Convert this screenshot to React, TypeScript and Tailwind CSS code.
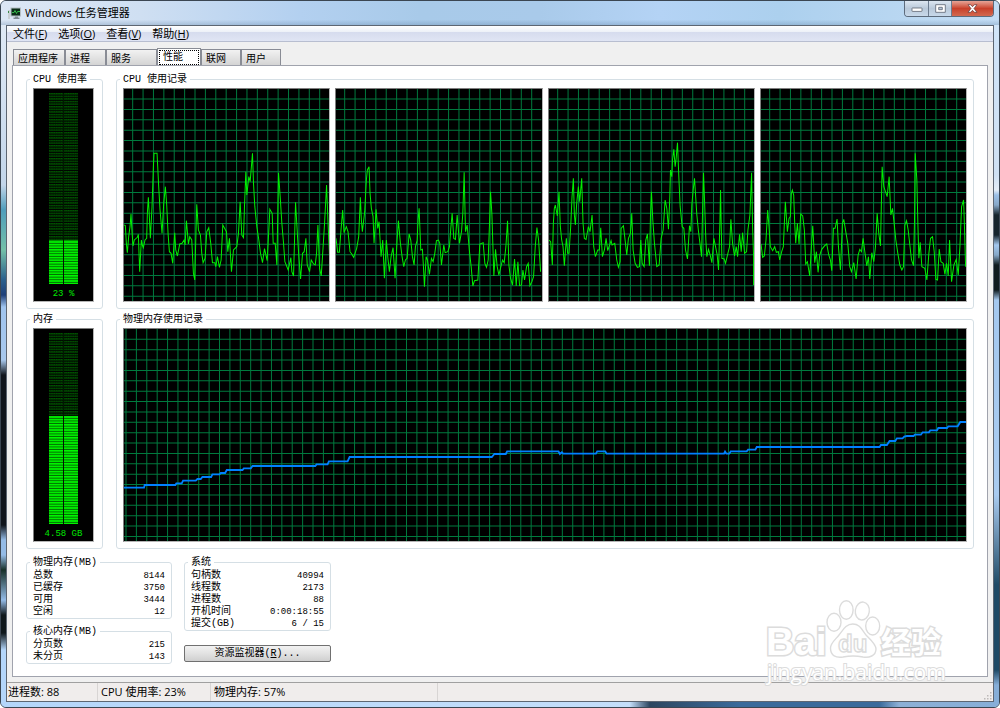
import { useState } from 'react';
import type { ReactNode } from 'react';

const MENUS = [
  { label: '文件', key: 'F' },
  { label: '选项', key: 'O' },
  { label: '查看', key: 'V' },
  { label: '帮助', key: 'H' },
];

const TABS = [
  { label: '应用程序', width: 'w-[52px]' },
  { label: '进程', width: 'w-[41px]' },
  { label: '服务', width: 'w-[51px]' },
  { label: '性能', width: 'w-[44px]' },
  { label: '联网', width: 'w-[40px]' },
  { label: '用户', width: 'w-[40px]' },
];

// One trace per CPU core, three units per pixel
const CORES = [
  '12,435 16,437 19,490 22,518 26,470 30,440 33,402 36,455 39,498 43,480 52,472 55,463 59,575 64,480 67,495 70,503 75,480 80,475 82,400 85,352 88,410 91,475 96,380 100,262 102,220 111,220 116,320 120,390 126,460 131,370 136,320 140,375 144,460 148,515 153,520 158,550 164,458 167,510 172,528 179,492 186,490 192,480 195,495 199,422 205,492 209,470 215,480 220,580 224,600 227,480 230,373 235,450 241,465 245,520 249,548 255,535 260,455 266,443 272,490 277,548 284,548 287,560 292,530 298,562 303,540 308,435 319,455 323,515 328,475 334,575 340,510 350,500 355,460 360,365 365,465 370,473 373,380 377,275 380,345 386,290 390,305 397,220 400,310 404,380 410,440 416,480 421,520 427,548 433,506 441,542 447,430 449,388 456,400 459,490 465,490 470,555 475,278 480,350 485,430 490,490 494,545 504,570 512,533 515,575 520,588 523,480 526,367 532,470 536,530 541,597 547,520 552,515 557,475 561,555 568,575 573,540 580,552 585,555 589,520 593,435 598,565 603,588 608,510 613,430 619,315 623,420 628,532',
  '12,475 17,517 22,517 27,450 32,390 36,458 43,440 48,455 54,515 59,522 65,532 74,505 80,470 83,400 85,352 88,420 91,455 98,395 103,300 106,270 111,260 114,340 118,385 123,410 126,490 130,430 132,388 137,445 141,425 147,530 152,480 157,595 163,480 167,530 172,575 177,530 183,503 189,595 195,480 199,422 205,490 210,530 215,560 220,540 225,535 231,462 236,480 241,530 246,555 250,500 255,482 258,420 261,385 266,510 271,508 274,560 277,620 282,530 286,540 292,583 298,535 303,545 308,520 313,482 319,480 323,490 328,555 335,495 339,518 347,515 352,500 356,445 360,400 365,475 370,478 375,405 382,490 388,455 392,400 396,277 400,455 405,435 412,515 417,560 422,618 427,602 437,600 443,492 453,488 458,550 463,562 468,540 472,430 475,335 479,400 485,588 490,508 495,560 500,585 506,560 511,540 516,548 521,500 526,422 530,555 535,595 541,615 547,537 552,618 557,545 562,617 568,615 572,570 577,600 583,560 588,550 593,617 599,605 604,590 609,500 614,443 619,480 625,575',
  '12,480 17,485 22,555 25,430 28,385 31,375 37,408 42,335 46,440 50,480 54,500 58,557 64,475 68,520 72,520 77,440 81,350 85,295 88,405 91,435 95,370 100,320 104,365 110,295 114,430 118,475 123,478 130,440 135,455 141,405 146,500 151,530 158,510 163,510 167,443 172,530 178,510 183,475 188,512 198,482 201,495 209,490 215,540 220,562 225,545 228,445 235,437 240,480 245,525 250,475 256,460 260,400 264,510 270,550 277,562 283,560 287,480 291,550 297,560 302,480 307,462 313,557 316,410 319,335 323,420 328,490 335,560 342,555 348,475 354,450 360,360 365,385 370,448 374,350 376,270 380,290 382,240 386,208 390,260 393,235 397,188 401,290 405,380 411,440 416,445 421,510 427,537 433,437 437,455 440,375 444,330 448,295 455,405 460,455 465,495 469,530 472,400 475,278 478,360 482,480 485,530 490,508 495,525 500,548 506,475 511,500 516,525 520,570 524,430 526,330 530,535 537,537 541,550 548,520 553,500 557,418 562,490 568,528 573,500 577,530 583,463 588,515 592,458 598,520 604,515 608,450 614,405 619,278 622,440 625,530 625,615',
  '12,492 17,532 22,528 27,480 32,390 36,440 40,500 47,512 53,500 58,517 64,515 68,540 74,515 79,500 82,430 85,365 91,455 96,415 100,410 103,340 106,330 110,345 113,430 116,490 121,430 126,492 131,402 137,408 142,450 146,552 151,545 158,588 163,500 167,437 173,548 178,515 183,577 188,525 194,508 203,497 209,492 215,525 220,540 224,572 229,445 234,445 240,417 244,500 250,570 256,430 260,418 266,455 272,490 278,560 283,575 290,548 297,597 303,525 308,508 313,515 318,475 323,515 329,558 334,530 338,597 344,518 350,545 355,500 360,400 365,460 370,498 375,260 380,320 390,350 396,290 401,405 406,385 411,430 416,480 422,520 428,555 434,570 439,560 443,435 448,422 453,450 458,495 463,540 469,557 472,420 474,220 479,300 482,430 485,535 489,487 494,560 503,565 509,600 515,520 520,475 526,470 531,515 536,598 541,600 546,507 551,545 558,550 563,583 568,550 573,588 577,480 583,605 590,555 597,538 603,585 608,500 613,380 619,360 622,450 625,560 628,545',
];

const MEMORY =
  '42,533 102,533 104,525 196,525 199,520 215,520 219,512 257,512 262,507 272,507 277,501 303,501 307,493 328,493 332,489 345,489 350,480 397,480 401,475 422,475 427,468 615,468 619,463 652,463 656,454 712,454 718,441 1144,441 1152,432 1186,432 1190,424 1344,424 1348,432 1354,427 1358,431 1456,431 1460,424 1484,424 1488,431 1840,431 1843,425 1847,431 1856,431 1860,424 1908,424 1912,419 1934,419 1938,411 2306,411 2310,405 2328,405 2336,393 2353,393 2358,385 2375,385 2380,380 2388,378 2408,378 2412,374 2430,374 2435,367 2454,367 2458,361 2478,361 2482,354 2508,354 2512,349 2540,349 2548,336 2570,336';

const STEP = 31.13;

type GraphProps = {
  label: string;
  points: string;
  x: number;
  y: number;
  width: number;
  firstX: number;
  firstY: number;
  color: string;
  stroke: number;
};

function Graph({ label, points, x, y, width, firstX, firstY, color, stroke }: GraphProps) {
  const cols = Math.ceil((x + width - firstX) / STEP);
  const rows = 20;

  return (
    <div className="h-[214px] min-w-0 flex-1 border border-t-[#7f7f7f] border-l-[#7f7f7f] border-r-[#b5b5b5] border-b-[#b5b5b5] bg-black">
      <svg
        role="img"
        aria-label={label}
        viewBox={`${x} ${y} ${width} 636`}
        preserveAspectRatio="none"
        className="block h-full w-full"
      >
        <g stroke="#007a3e" strokeWidth="3">
          {Array.from({ length: cols }, (_, i) => (
            <line key={`c${i}`} x1={firstX + i * STEP} x2={firstX + i * STEP} y1={y} y2={y + 636} />
          ))}
          {Array.from({ length: rows }, (_, i) => (
            <line key={`r${i}`} x1={x} x2={x + width} y1={firstY + i * STEP} y2={firstY + i * STEP} />
          ))}
        </g>
        <polyline points={points} fill="none" stroke={color} strokeWidth={stroke} />
      </svg>
    </div>
  );
}

function Meter({ id, label, filled, text }: { id: string; label: string; filled: number; text: string }) {
  return (
    <div className="flex h-[214px] w-[61px] flex-col items-center border border-t-[#7f7f7f] border-l-[#7f7f7f] border-r-[#b5b5b5] border-b-[#b5b5b5] bg-black pt-1">
      <svg role="img" aria-label={label} width="29" height="191" viewBox="0 0 29 191">
        <defs>
          <pattern id={`${id}-off`} width="1.73" height="2.6" patternUnits="userSpaceOnUse">
            <rect width="1.73" height="1.7" fill="#003800" />
            <rect width="0.86" height="0.9" fill="#005c00" />
          </pattern>
          <pattern id={`${id}-on`} width="29" height="2.6" patternUnits="userSpaceOnUse">
            <rect width="29" height="2.6" fill="#006800" />
            <rect width="29" height="1.6" fill="#00f800" />
          </pattern>
        </defs>
        <rect width="29" height={191 - filled} fill={`url(#${id}-off)`} />
        <rect y={191 - filled} width="29" height={filled} fill={`url(#${id}-on)`} />
        <rect x="14" width="1" height="191" fill="#001800" />
      </svg>
      <span className="pt-1 font-['Liberation_Mono',monospace] text-[9px] leading-3 text-[#00e800]">{text}</span>
    </div>
  );
}

function GroupBox({ title, className = '', children }: { title: string; className?: string; children: ReactNode }) {
  return (
    <fieldset className={`min-w-0 rounded-[3px] border border-[#d5dfe5] px-[3px] ${className}`}>
      <legend className="px-[3px] pt-0.5 leading-3 whitespace-pre">{title}</legend>
      <div className="px-[3px]">{children}</div>
    </fieldset>
  );
}

function StatTable({ rows }: { rows: [string, string][] }) {
  return (
    <table className="w-full border-collapse leading-3">
      <tbody>
        {rows.map(([name, value]) => (
          <tr key={name}>
            <th scope="row" className="p-0 text-left font-normal">
              {name}
            </th>
            <td className="h-3 p-0 text-right text-[9px] leading-3 whitespace-pre">{value}</td>
          </tr>
        ))}
      </tbody>
    </table>
  );
}

function AppIcon() {
  return (
    <svg width="13" height="13" viewBox="0 0 13 13" aria-hidden="true">
      <rect x="0" y="3" width="2" height="9" fill="#c9d0d4" />
      <rect x="0" y="4" width="1" height="2" fill="#3c8b46" />
      <rect x="2.5" y="0.5" width="10.5" height="9" fill="#b4bec4" />
      <rect x="3.5" y="1.5" width="8.5" height="7" fill="#0b2d18" />
      <path d="M4 5.5h2l1-2 1.5 3 1-2H12" fill="none" stroke="#35b84a" strokeWidth="1" />
      <path d="M7 9.5h3v1h1.5V12h-6v-1.5H7z" fill="#7e8a91" />
    </svg>
  );
}

function WindowButtons() {
  return (
    <div className="flex h-4 overflow-hidden rounded-b-[4px] border border-t-0 border-[#5d6b7c]">
      <button aria-label="最小化" className="flex w-6 items-center justify-center border-r border-[#6c7c90] bg-linear-to-b from-[#dce6f1] via-[#b9c9da] to-[#c7d8ea]">
        <svg width="12" height="6" viewBox="0 0 12 6">
          <rect x="1" y="2" width="10" height="3.4" rx="0.5" fill="#fff" stroke="#5a6270" strokeWidth="0.8" />
        </svg>
      </button>
      <button aria-label="最大化" className="flex w-[23px] items-center justify-center border-r border-[#6c7c90] bg-linear-to-b from-[#dce6f1] via-[#b9c9da] to-[#c7d8ea]">
        <svg width="11" height="9" viewBox="0 0 11 9">
          <path d="M.7.7h9.6v7.6H.7zM3.7 3.3v2.4h3.6V3.3z" fill="#fff" fillRule="evenodd" stroke="#5a6270" strokeWidth="0.8" />
        </svg>
      </button>
      <button aria-label="关闭" className="flex w-[41px] items-center justify-center bg-linear-to-b from-[#e5a497] via-[#c8402a] to-[#d2684f]">
        <svg width="11" height="9" viewBox="0 0 11 9">
          <path d="M1 .7h2.6l1.9 2 1.9-2H10L7 4.5l3 3.8H7.4l-1.9-2-1.9 2H1l3-3.8z" fill="#fff" stroke="#5b3a3c" strokeWidth="0.7" />
        </svg>
      </button>
    </div>
  );
}

function Watermark() {
  return (
    <svg
      className="pointer-events-none absolute right-[50px] bottom-[18px]"
      width="190"
      height="92"
      viewBox="0 0 190 92"
      fill="#fff"
      stroke="#dcdcdc"
      strokeWidth="1.4"
    >
      <ellipse cx="75" cy="25.3" rx="7" ry="9" />
      <ellipse cx="87.3" cy="13" rx="6.8" ry="9.3" />
      <ellipse cx="103.3" cy="14" rx="7" ry="9" transform="rotate(8 103.3 14)" />
      <ellipse cx="113.7" cy="29" rx="7" ry="9" />
      <path d="M93.7 27C101 27 103 33 107 38C112 43 117 47 117 52C117 59 110 61 104 60C97 58.5 91 58.5 84 60C77 61 71.5 59 71.5 51C71.5 46 77 42 80 38C84 33 87 27 93.7 27Z" />
      <g fontFamily="'Liberation Sans', sans-serif" fontWeight="700">
        <text x="7" y="58" fontSize="39" strokeWidth="3" paintOrder="stroke">
          Bai
        </text>
        <text x="79" y="55" fontSize="24">
          du
        </text>
      </g>
      <text
        x="122"
        y="56"
        fontSize="30"
        fontWeight="700"
        strokeWidth="3"
        paintOrder="stroke"
        fontFamily="'Noto Sans CJK SC', sans-serif"
      >
        经验
      </text>
      <text x="8" y="83" fontSize="21" strokeWidth="2" paintOrder="stroke" fontFamily="'Open Sans', sans-serif">
        jingyan.baidu.com
      </text>
    </svg>
  );
}

export default function App() {
  const [active, setActive] = useState('性能');

  return (
    <div className="relative flex min-h-screen flex-col overflow-hidden rounded-[6px] border border-[#3b4652] bg-[#bcd9fb] font-['Open_Sans','Noto_Sans_CJK_SC',sans-serif] text-[10px] text-black">
      {/* Title bar */}
      <header className="flex h-6 items-start justify-between bg-[linear-gradient(180deg,transparent_78%,rgba(90,125,160,0.3)_100%),linear-gradient(90deg,#dce7f5_0%,#cfdff2_14%,#b3d0f0_30%,#a8cae9_42%,#a9caea_54%,#b4d3f5_66%,#acd0ee_78%,#c3dcf4_100%)] pr-[5px] pl-[7px]">
        <div className="flex items-center gap-1 pt-1">
          <AppIcon />
          <h1 className="text-[11px] leading-4">Windows 任务管理器</h1>
        </div>
        <WindowButtons />
      </header>

      <div className="flex flex-1">
        {/* Glass edge, desktop showing through */}
        <div className="w-[5px] bg-[linear-gradient(180deg,#dfe9f5_0px,#c3d6ea_160px,#4f9dbb_185px,#74c0a8_225px,#2a5f8c_255px,#1f3f78_270px,#a0c4ee_282px,#a8c8ec_335px,#10151c_350px,#10151c_500px,#94bbe6_515px,#94bbe6_530px,#173028_545px,#94bbe6_575px,#10181c_590px,#10181c_608px,#b4d6fa_625px)]" />

        <div className="flex min-w-0 flex-1 flex-col border border-[#5d6672] bg-[#f0f0f0]">
          <nav className="flex h-4 gap-[11px] border-b border-[#b8bed0] bg-[linear-gradient(180deg,#ffffff_0%,#edf1f8_38%,#d6dcee_42%,#e0e5f4_100%)] pl-1.5 text-[11px]">
            {MENUS.map(({ label, key }) => (
              <button key={key} className="leading-4">
                {label}(<u>{key}</u>)
              </button>
            ))}
          </nav>

          <main className="flex flex-1 flex-col px-[5px] pt-1.5 pb-[5px] font-['Liberation_Mono','Noto_Sans_CJK_SC',monospace]">
            <div role="tablist" className="flex h-[17px] items-end pl-px">
              {TABS.map(({ label, width }) =>
                label === active ? (
                  <button
                    key={label}
                    role="tab"
                    aria-selected="true"
                    className={`${width} h-[17px] border border-b-0 border-[#898c95] bg-white p-px`}
                  >
                    <span className="block border border-dotted border-black pl-[3px] text-left leading-[13px]">{label}</span>
                  </button>
                ) : (
                  <button
                    key={label}
                    role="tab"
                    aria-selected="false"
                    onClick={() => setActive(label)}
                    className={`${width} h-4 border border-b-0 border-[#898c95] bg-linear-to-b from-[#f2f2f2] to-[#d4d4d4] pt-0.5 pl-1 text-left leading-[15px]`}
                  >
                    {label}
                  </button>
                )
              )}
            </div>

            <div role="tabpanel" className="flex-1 border border-[#a0a3ad] bg-white px-[13px] pt-1.5">
              {/* CPU */}
              <div className="flex gap-[13px]">
                <GroupBox title="CPU 使用率" className="w-[77px] pt-0.5 pb-1.5">
                  <Meter id="cpu" label="CPU 使用率" filled={44} text="23 %" />
                </GroupBox>
                <GroupBox title="CPU 使用记录" className="flex-1 pt-0.5 pb-1.5">
                  <div className="flex gap-[5px]">
                    {CORES.map((points, i) => (
                      <Graph
                        key={i}
                        label={`CPU ${i}`}
                        points={points}
                        x={12}
                        y={27}
                        width={615}
                        firstX={38}
                        firstY={57}
                        color="#00f000"
                        stroke={3}
                      />
                    ))}
                  </div>
                </GroupBox>
              </div>

              {/* Memory */}
              <div className="mt-[3px] flex gap-[13px]">
                <GroupBox title="内存" className="w-[77px] pt-0.5 pb-1.5">
                  <Meter id="mem" label="内存" filled={108} text="4.58 GB" />
                </GroupBox>
                <GroupBox title="物理内存使用记录" className="flex-1 pt-0.5 pb-1.5">
                  <div className="flex">
                    <Graph
                      label="物理内存使用记录"
                      points={MEMORY}
                      x={42}
                      y={57}
                      width={2523}
                      firstX={48}
                      firstY={88}
                      color="#0080ff"
                      stroke={5.5}
                    />
                  </div>
                </GroupBox>
              </div>

              {/* Totals */}
              <div className="mt-1.5 flex gap-3">
                <div className="flex w-[146px] flex-col gap-[5px]">
                  <GroupBox title="物理内存(MB)" className="pt-px">
                    <StatTable
                      rows={[
                        ['总数', '8144'],
                        ['已缓存', '3750'],
                        ['可用', '3444'],
                        ['空闲', '12'],
                      ]}
                    />
                  </GroupBox>
                  <GroupBox title="核心内存(MB)" className="pt-px">
                    <StatTable
                      rows={[
                        ['分页数', '215'],
                        ['未分页', '143'],
                      ]}
                    />
                  </GroupBox>
                </div>
                <div className="flex w-[147px] flex-col gap-3.5">
                  <GroupBox title="系统" className="pt-px">
                    <StatTable
                      rows={[
                        ['句柄数', '40994'],
                        ['线程数', '2173'],
                        ['进程数', '88'],
                        ['开机时间', '0:00:18:55'],
                        ['提交(GB)', '6 / 15'],
                      ]}
                    />
                  </GroupBox>
                  <button className="h-[17px] rounded-[2px] border border-[#707070] bg-linear-to-b from-[#f2f2f2] via-[#e2e2e2] to-[#cfcfcf] leading-[15px]">
                    资源监视器(<u>R</u>)...
                  </button>
                </div>
              </div>
            </div>
          </main>

          <footer className="flex h-[19px] border-t border-[#a0a0a0] bg-[#f0edec] text-[11px] leading-[18px]">
            <span className="w-[91px] border-r border-[#d8d5d4] pl-px">进程数: 88</span>
            <span className="w-[113px] border-r border-[#d8d5d4] pl-[3px]">CPU 使用率: 23%</span>
            <span className="w-[227px] border-r border-[#d8d5d4] pl-[3px]">物理内存: 57%</span>
            <svg className="mt-auto ml-auto" width="10" height="10" viewBox="0 0 10 10" fill="#bdb9b8" aria-hidden="true">
              <path d="M7 1h1.5v1.5H7zM4 4h1.5v1.5H4zM7 4h1.5v1.5H7zM1 7h1.5v1.5H1zM4 7h1.5v1.5H4zM7 7h1.5v1.5H7z" />
            </svg>
          </footer>
        </div>

        <div className="w-[5px] bg-[linear-gradient(180deg,#d0e4f8_0px,#cfe0f2_150px,#e4edf7_165px,#9cc0e6_170px,#87a8c8_180px,#16242c_190px,#16242c_210px,#a4c8ee_220px,#86a8c8_230px,#101c20_240px,#101c20_265px,#a4c8ee_275px,#a9cbef_470px,#1f4a66_560px,#1f4a66_645px,#86aed8_660px)]" />
      </div>
      <div className="h-[5px] bg-[linear-gradient(90deg,#b4d6fa_0%,#c4defa_63%,#2d4660_65%,#3a6a9b_74%,#3a6a9b_88%,#8db0d6_90%,#86aed8_100%)]" />

      <Watermark />
    </div>
  );
}
